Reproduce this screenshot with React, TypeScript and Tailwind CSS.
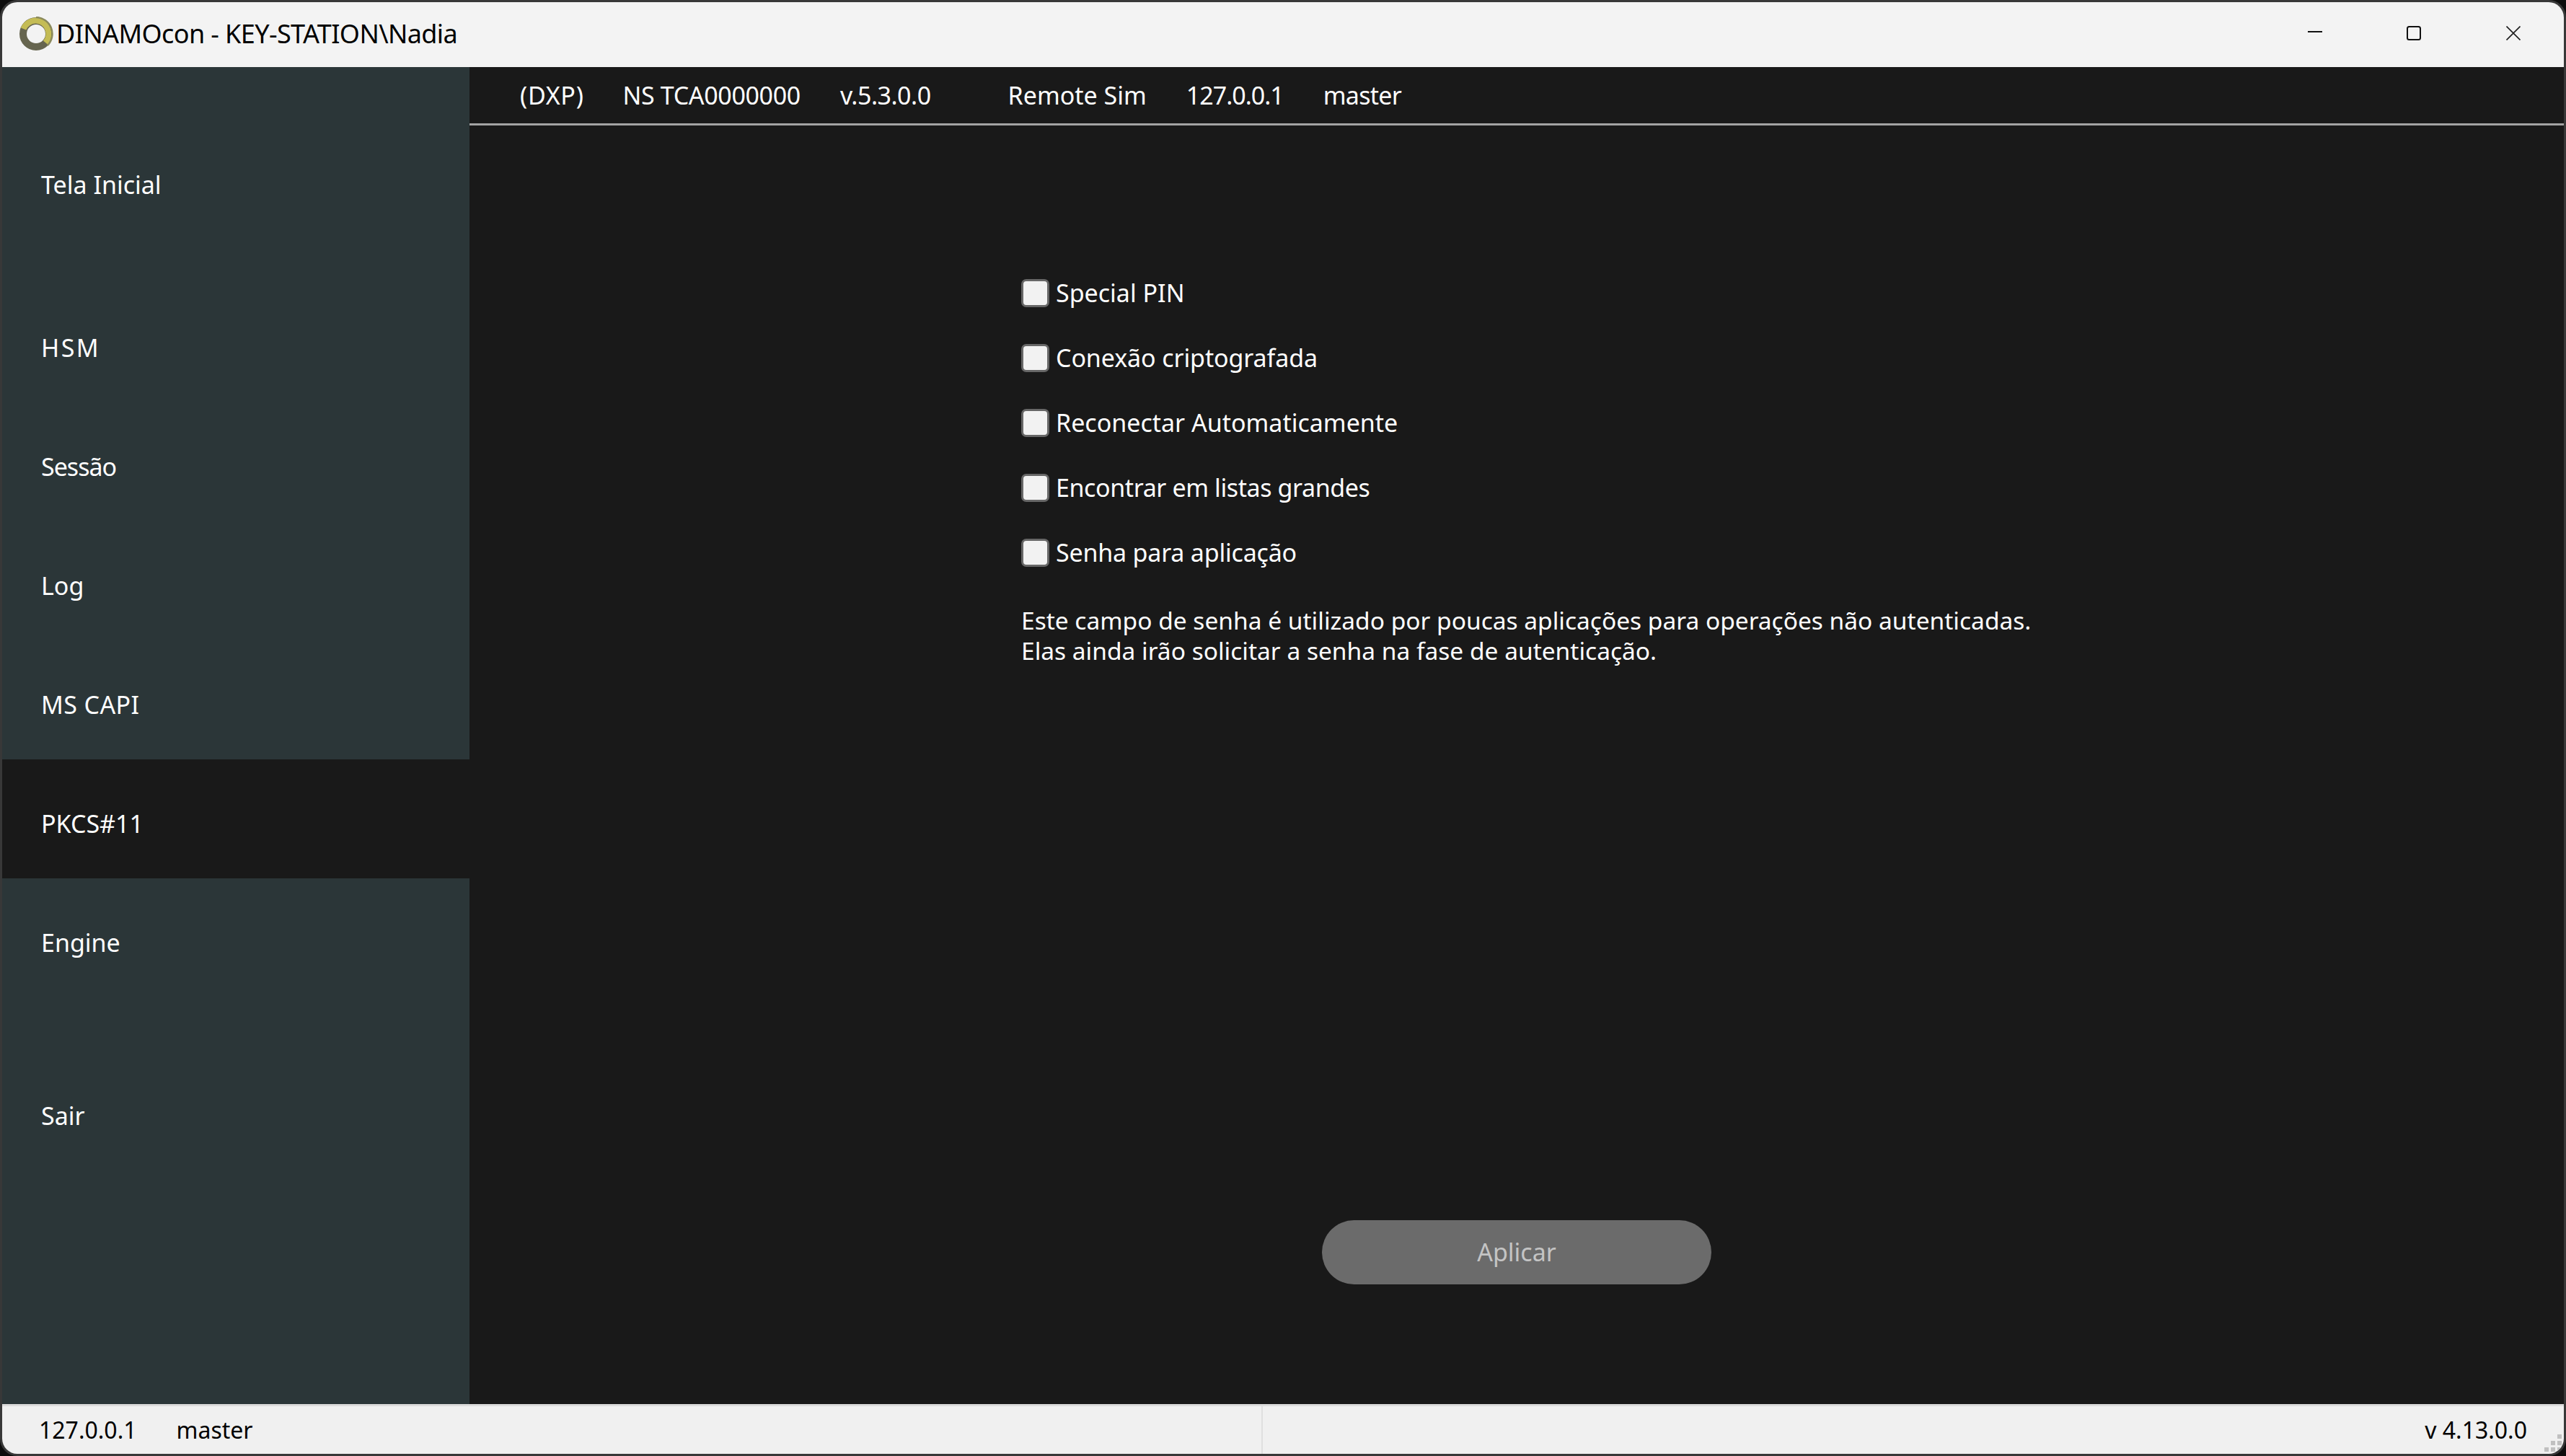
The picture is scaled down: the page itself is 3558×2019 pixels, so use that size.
const navTop = [
  { label: "HSM", cls: "tracking-[2.5px]" },
  { label: "Sessão", cls: "tracking-[-1px]" },
  { label: "Log", cls: "" },
  { label: "MS CAPI", cls: "tracking-[0.4px]" },
  { label: "PKCS#11", cls: "" },
  { label: "Engine", cls: "" },
];
const options = [
  { label: "Special PIN", cls: "" },
  { label: "Conexão criptografada", cls: "tracking-[-0.1px]" },
  { label: "Reconectar Automaticamente", cls: "" },
  { label: "Encontrar em listas grandes", cls: "tracking-[-0.4px]" },
  { label: "Senha para aplicação", cls: "tracking-[-0.2px]" },
];

function Logo() {
  return (
    <svg width="48" height="48" viewBox="0 0 48 48" className="shrink-0">
      <circle cx="24" cy="24" r="18" fill="none" stroke="#66654f" strokeWidth="10" />
      <path d="M6.5 17 A18.5 18.5 0 0 1 24 5.5 A18.5 18.5 0 0 1 37 36" fill="none" stroke="#c4bc55" strokeWidth="8" />
      <path d="M24 1 A23 23 0 0 1 40 40" fill="none" stroke="#8b8a5c" strokeWidth="2.5" />
    </svg>
  );
}

function NavItem({ label, active, cls = "" }: { label: string; active?: boolean; cls?: string }) {
  return (
    <div className={`flex h-[165px] items-center pl-[54px] pt-[13px] text-white ${active ? "bg-[#191919]" : ""} ${cls}`}>
      {label}
    </div>
  );
}

export default function App() {
  return (
    <div className="h-[2019px] w-[3558px] overflow-hidden bg-[#0d0d0d] font-['Noto_Sans',sans-serif] text-[34px]">
      <div className="flex h-[2019px] flex-col overflow-hidden rounded-[24px] border-[3px] border-[#383838] bg-[#191919]">
        <div className="flex h-[90px] shrink-0 items-center justify-between bg-[#f3f3f3]">
          <div className="flex items-center pl-[23px] pb-[2px] text-[36px] leading-none tracking-[-0.6px] text-black">
            <Logo />
            <span className="ml-[4px]">DINAMOcon - KEY-STATION\Nadia</span>
          </div>
          <div className="flex items-center pb-[5px] pr-[60px]">
            <svg width="20" height="20" viewBox="0 0 20 20" className="mr-[117px]">
              <path d="M0 8h20" stroke="#111" strokeWidth="2" />
            </svg>
            <svg width="20" height="20" viewBox="0 0 20 20" className="mr-[118px]">
              <rect x="1" y="1" width="18" height="18" rx="2.5" fill="none" stroke="#111" strokeWidth="2" />
            </svg>
            <svg width="20" height="20" viewBox="0 0 20 20">
              <path d="M0.5 0.5L19.5 19.5M19.5 0.5L0.5 19.5" stroke="#222" strokeWidth="1.7" />
            </svg>
          </div>
        </div>

        <div className="flex min-h-0 flex-1">
          <nav className="flex w-[648px] shrink-0 flex-col bg-[#2b3638] pt-[74px]">
            <NavItem label="Tela Inicial" />
            <div className="h-[61px]" />
            {navTop.map((n) => (
              <NavItem key={n.label} label={n.label} cls={n.cls} active={n.label === "PKCS#11"} />
            ))}
            <div className="h-[75px]" />
            <NavItem label="Sair" />
          </nav>

          <main className="flex min-w-0 flex-1 flex-col text-white">
            <div className="flex h-[81px] shrink-0 items-center border-b-[3px] border-[#a3a3a3] pl-[70px]">
              <span className="tracking-[0.7px]">(DXP)</span>
              <span className="ml-[54px] tracking-[-0.35px]">NS TCA0000000</span>
              <span className="ml-[55px] tracking-[-0.5px]">v.5.3.0.0</span>
              <span className="ml-[107px]">Remote Sim</span>
              <span className="ml-[55px] tracking-[-1px]">127.0.0.1</span>
              <span className="ml-[55px] tracking-[-0.75px]">master</span>
            </div>

            <div className="flex flex-1 flex-col pl-[765px] pt-[213px]">
              <div className="flex flex-col gap-[51px]">
                {options.map((o) => (
                  <label key={o.label} className="flex h-[39px] items-center">
                    <span className="h-[39px] w-[39px] shrink-0 rounded-[7px] border-[3px] border-[#676767] bg-[#f2f2f2]" />
                    <span className={`ml-[9px] ${o.cls}`}>{o.label}</span>
                  </label>
                ))}
              </div>
              <p className="mt-[53px] text-[33.5px] leading-[42px]">
                Este campo de senha é utilizado por poucas aplicações para operações não autenticadas.
                <br />
                Elas ainda irão solicitar a senha na fase de autenticação.
              </p>
              <div className="mt-[769px] ml-[417px] flex h-[89px] w-[540px] items-center justify-center rounded-full bg-[#6b6b6b] text-[#c4c4c4]">
                Aplicar
              </div>
            </div>
          </main>
        </div>

        <footer className="relative flex h-[69px] shrink-0 items-center border-t-[3px] border-[#dcdcdc] bg-[#f0f0f0] text-[32px] text-black">
          <span className="ml-[51px]">127.0.0.1</span>
          <span className="ml-[55px]">master</span>
          <div className="ml-[1398px] h-full w-[2px] bg-[#e0e0e0]" />
          <span className="ml-auto mr-[51px]">v 4.13.0.0</span>
          <div className="absolute bottom-[3px] right-[3px] grid grid-cols-3 gap-[3px]">
            <span className="h-[6px] w-[6px]" />
            <span className="h-[6px] w-[6px]" />
            <span className="h-[6px] w-[6px] bg-[#c0c0c0]" />
            <span className="h-[6px] w-[6px]" />
            <span className="h-[6px] w-[6px] bg-[#c0c0c0]" />
            <span className="h-[6px] w-[6px] bg-[#c0c0c0]" />
            <span className="h-[6px] w-[6px] bg-[#c0c0c0]" />
            <span className="h-[6px] w-[6px] bg-[#c0c0c0]" />
            <span className="h-[6px] w-[6px] bg-[#c0c0c0]" />
          </div>
        </footer>
      </div>
    </div>
  );
}
